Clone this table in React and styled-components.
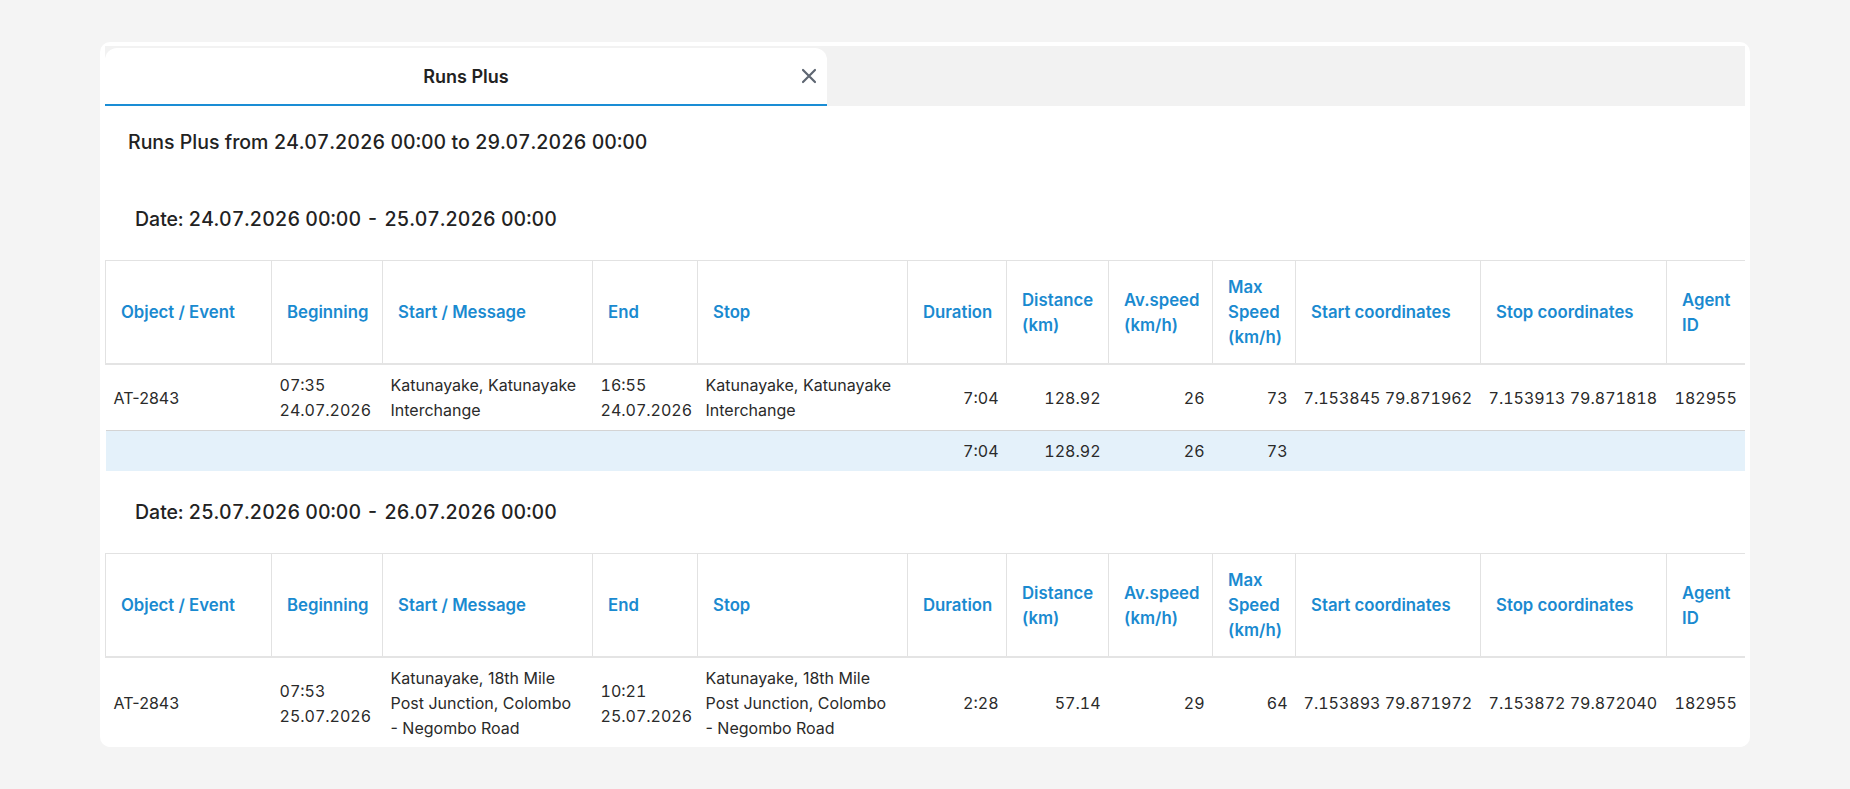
import React from 'react';
import styled, { createGlobalStyle } from 'styled-components';

const GlobalStyle = createGlobalStyle`
  * {
    box-sizing: border-box;
  }

  body {
    margin: 0;
    background: #f4f4f4;
    font-family: Inter, "Noto Sans", "Liberation Sans", sans-serif;
    color: #222;
  }
`;

const Page = styled.div`
  height: 789px;
  padding: 42px 100px;
`;

const Card = styled.div`
  display: flex;
  flex-direction: column;
  height: 100%;
  padding: 4px 5px 0;
  background: #fff;
  border-radius: 10px;
  overflow: hidden;
`;

const TabBar = styled.div`
  display: flex;
  flex-shrink: 0;
  padding-top: 2px;
  background: #f2f2f2;
`;

const Tab = styled.div`
  display: grid;
  grid-template-columns: 36px 1fr 36px;
  align-items: center;
  width: 722px;
  height: 58px;
  background: #fff;
  border-radius: 12px 12px 0 0;
  border-bottom: 2px solid #1a8dd5;
`;

const TabTitle = styled.span`
  grid-column: 2;
  text-align: center;
  font-size: 18px;
  font-weight: 600;
  color: #222;
`;

const CloseButton = styled.button`
  display: flex;
  align-items: center;
  justify-content: center;
  width: 36px;
  height: 36px;
  padding: 0;
  border: none;
  background: none;
  cursor: pointer;
  color: #5e6672;
`;

const Content = styled.div`
  flex: 1;
  overflow: hidden;
`;

const ReportTitle = styled.h1`
  margin: 0;
  padding: 25px 23px 25px;
  font-size: 19.5px;
  line-height: 22px;
  font-weight: 500;
  font-variant-numeric: tabular-nums;
  color: #222;
`;

const DateHeading = styled.h2`
  margin: 0;
  padding: 0 30px;
  font-size: 19.5px;
  line-height: 82px;
  font-weight: 500;
  font-variant-numeric: tabular-nums;
  color: #222;
`;

const Table = styled.table`
  width: 100%;
  table-layout: fixed;
  border-collapse: collapse;
  font-size: 16px;
  line-height: 25px;
`;

const HeadCell = styled.th`
  padding: 14px 13px 13px 15px;
  border: 1px solid #e2e2e2;
  border-bottom: 2px solid #e4e4e4;
  text-align: left;
  vertical-align: middle;
  font-size: 16.75px;
  font-weight: 600;
  color: #1a8ad0;
`;

const Row = styled.tr`
  background: ${({ $total }) => ($total ? '#e4f1fa' : '#fff')};
  border-bottom: ${({ $total }) => ($total ? 'none' : '1px solid #d4d4d4')};
`;

const Cell = styled.td`
  padding: 8px 8px 7px;
  text-align: ${({ $num }) => ($num ? 'right' : 'left')};
  white-space: ${({ $nowrap }) => ($nowrap ? 'nowrap' : 'normal')};
  font-variant-numeric: ${({ $plain }) => ($plain ? 'normal' : 'tabular-nums')};
  vertical-align: middle;
  color: #2a2a2a;
`;

const columns = [
  { title: 'Object / Event', width: 166 },
  { title: 'Beginning', width: 111 },
  { title: 'Start / Message', width: 210 },
  { title: 'End', width: 105 },
  { title: 'Stop', width: 210 },
  { title: 'Duration', width: 99 },
  { title: 'Distance (km)', width: 102 },
  { title: 'Av.speed (km/h)', width: 104 },
  { title: 'Max Speed (km/h)', width: 83 },
  { title: 'Start coordinates', width: 185 },
  { title: 'Stop coordinates', width: 186 },
  { title: 'Agent ID', width: 79 },
];

// word joiner keeps the dash on the same line as "Negombo"
const colomboRoad = 'Katunayake, 18th Mile Post Junction, Colombo -\u2060\u00a0Negombo Road';

const days = [
  {
    label: 'Date: 24.07.2026 00:00 - 25.07.2026 00:00',
    runs: [
      {
        object: 'AT-2843',
        begin: ['07:35', '24.07.2026'],
        start: 'Katunayake, Katunayake Interchange',
        end: ['16:55', '24.07.2026'],
        stop: 'Katunayake, Katunayake Interchange',
        duration: '7:04',
        distance: '128.92',
        avg: '26',
        max: '73',
        startCoords: '7.153845 79.871962',
        stopCoords: '7.153913 79.871818',
        agent: '182955',
      },
    ],
    total: { duration: '7:04', distance: '128.92', avg: '26', max: '73' },
  },
  {
    label: 'Date: 25.07.2026 00:00 - 26.07.2026 00:00',
    runs: [
      {
        object: 'AT-2843',
        begin: ['07:53', '25.07.2026'],
        start: colomboRoad,
        end: ['10:21', '25.07.2026'],
        stop: colomboRoad,
        duration: '2:28',
        distance: '57.14',
        avg: '29',
        max: '64',
        startCoords: '7.153893 79.871972',
        stopCoords: '7.153872 79.872040',
        agent: '182955',
      },
    ],
    total: { duration: '2:28', distance: '57.14', avg: '29', max: '64' },
  },
];

const CloseIcon = () => (
  <svg width="16" height="16" viewBox="0 0 16 16" fill="none">
    <path d="M2 2L14 14M14 2L2 14" stroke="currentColor" strokeWidth="2.2" strokeLinecap="round" />
  </svg>
);

const RunRow = ({ run }) => (
  <Row>
    <Cell $plain>{run.object}</Cell>
    <Cell>{run.begin[0]}<br />{run.begin[1]}</Cell>
    <Cell $plain>{run.start}</Cell>
    <Cell>{run.end[0]}<br />{run.end[1]}</Cell>
    <Cell $plain>{run.stop}</Cell>
    <Cell $num>{run.duration}</Cell>
    <Cell $num>{run.distance}</Cell>
    <Cell $num>{run.avg}</Cell>
    <Cell $num>{run.max}</Cell>
    <Cell $nowrap>{run.startCoords}</Cell>
    <Cell $nowrap>{run.stopCoords}</Cell>
    <Cell>{run.agent}</Cell>
  </Row>
);

const TotalRow = ({ total }) => (
  <Row $total>
    <Cell colSpan={5} />
    <Cell $num>{total.duration}</Cell>
    <Cell $num>{total.distance}</Cell>
    <Cell $num>{total.avg}</Cell>
    <Cell $num>{total.max}</Cell>
    <Cell colSpan={3} />
  </Row>
);

const DaySection = ({ day }) => (
  <section>
    <DateHeading>{day.label}</DateHeading>
    <Table>
      <colgroup>
        {columns.map((c) => (
          <col key={c.title} style={{ width: c.width }} />
        ))}
      </colgroup>
      <thead>
        <tr>
          {columns.map((c) => (
            <HeadCell key={c.title}>{c.title}</HeadCell>
          ))}
        </tr>
      </thead>
      <tbody>
        {day.runs.map((run, i) => (
          <RunRow key={i} run={run} />
        ))}
        <TotalRow total={day.total} />
      </tbody>
    </Table>
  </section>
);

const App = () => {
  return (
    <Page>
      <GlobalStyle />
      <Card>
        <TabBar>
          <Tab>
            <TabTitle>Runs Plus</TabTitle>
            <CloseButton aria-label="Close">
              <CloseIcon />
            </CloseButton>
          </Tab>
        </TabBar>
        <Content>
          <ReportTitle>Runs Plus from 24.07.2026 00:00 to 29.07.2026 00:00</ReportTitle>
          {days.map((day) => (
            <DaySection key={day.label} day={day} />
          ))}
        </Content>
      </Card>
    </Page>
  );
};

export default App;
